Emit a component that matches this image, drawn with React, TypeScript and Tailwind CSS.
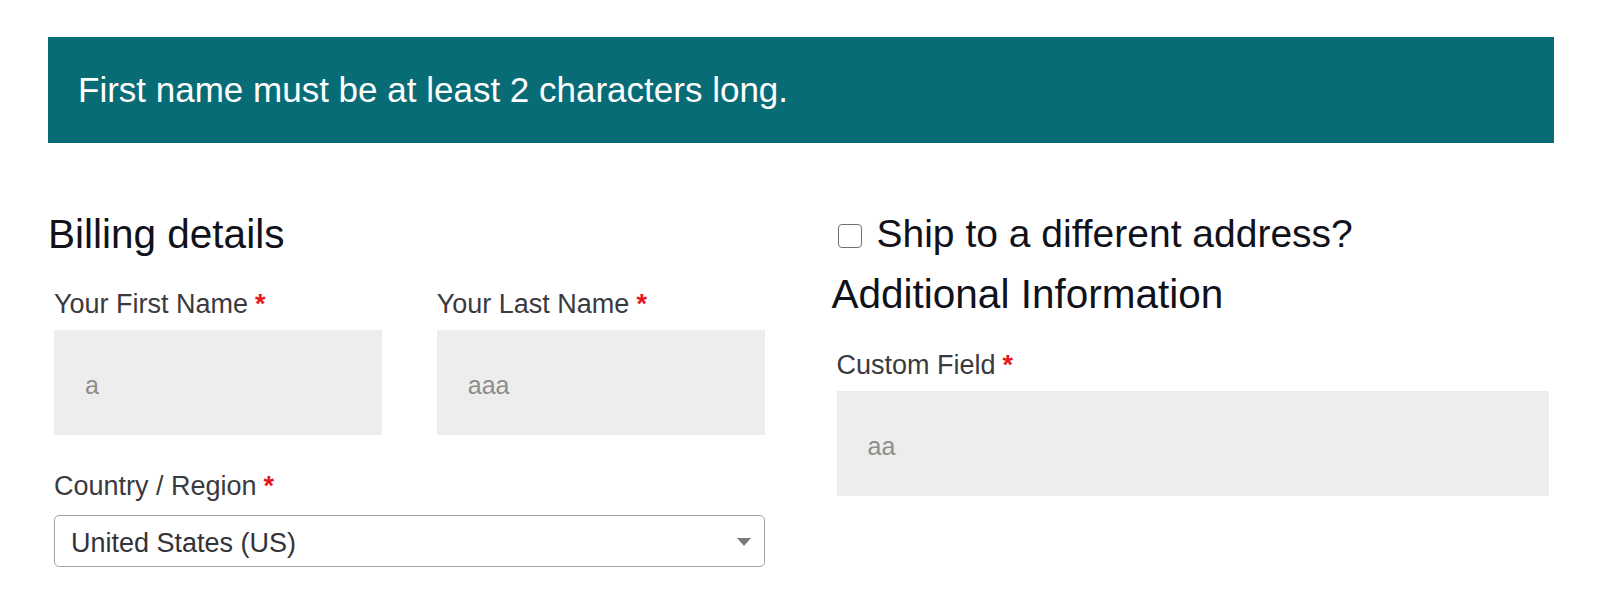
import { useState } from "react";

type FieldProps = {
  label: string;
  value: string;
  className?: string;
};

function Required() {
  return <span className="ml-[7px] font-bold text-[#e8141b]">*</span>;
}

function TextField({ label, value, className = "" }: FieldProps) {
  const [text, setText] = useState(value);
  return (
    <div className={className}>
      <label className="block text-[27px] leading-[32px] text-[#3a3a3f]">
        {label}
        <Required />
      </label>
      <input
        value={text}
        onChange={(e) => setText(e.target.value)}
        className="mt-[10px] block h-[105px] w-full bg-[#ededed] px-[31px] pt-[6px] text-[25px] text-[#8d8d8d] outline-none"
      />
    </div>
  );
}

export default function App() {
  const [shipElsewhere, setShipElsewhere] = useState(false);

  return (
    <div className="min-h-[598px] bg-white pt-[37px] font-['Liberation_Sans',Arial,sans-serif]">
      <div className="ml-[48px] w-[1506px]">
        {/* validation notice */}
        <div className="flex h-[106px] items-center bg-[#076c75] px-[30px]">
          <p className="text-[35px] text-white">First name must be at least 2 characters long.</p>
        </div>

        <div className="mt-[67px] grid grid-cols-2 gap-x-[61px]">
          {/* billing */}
          <div>
            <h3 className="text-[40.5px] leading-[48px] text-[#111119]">Billing details</h3>
            <div className="mt-[30px] grid grid-cols-2 gap-x-[55px] px-[6px]">
              <TextField label="Your First Name" value="a" />
              <TextField label="Your Last Name" value="aaa" />
            </div>
            <div className="mt-[35px] px-[6px]">
              <label className="block text-[27px] leading-[32px] text-[#3a3a3f]">
                Country / Region
                <Required />
              </label>
              <div className="relative mt-[13px]">
                <select
                  defaultValue="US"
                  className="block h-[52px] w-full appearance-none rounded-[5px] border-[1.5px] border-[#a3a3a3] bg-white pl-[16px] pt-[4px] text-[27px] text-[#333338] outline-none"
                >
                  <option value="US">United States (US)</option>
                  <option value="CA">Canada</option>
                  <option value="GB">United Kingdom (UK)</option>
                </select>
                <svg
                  className="pointer-events-none absolute right-[14px] top-[23px]"
                  width="14"
                  height="8"
                  viewBox="0 0 14 8"
                >
                  <path d="M0 0 L14 0 L7 8 Z" fill="#7b7b7b" />
                </svg>
              </div>
            </div>
          </div>

          {/* shipping + extras */}
          <div>
            <label className="flex items-center gap-[15px] pl-[6px] text-[39px] leading-[48px] text-[#111119]">
              <input
                type="checkbox"
                checked={shipElsewhere}
                onChange={(e) => setShipElsewhere(e.target.checked)}
                className="mt-[4px] h-[24px] w-[24px] shrink-0 appearance-none rounded-[4px] border-[1.5px] border-[#707070] bg-white"
              />
              Ship to a different address?
            </label>
            <h3 className="mt-[12px] text-[40.5px] leading-[48px] text-[#111119]">Additional Information</h3>
            <div className="mt-[31px] px-[5px]">
              <TextField label="Custom Field" value="aa" />
            </div>
          </div>
        </div>
      </div>
    </div>
  );
}
